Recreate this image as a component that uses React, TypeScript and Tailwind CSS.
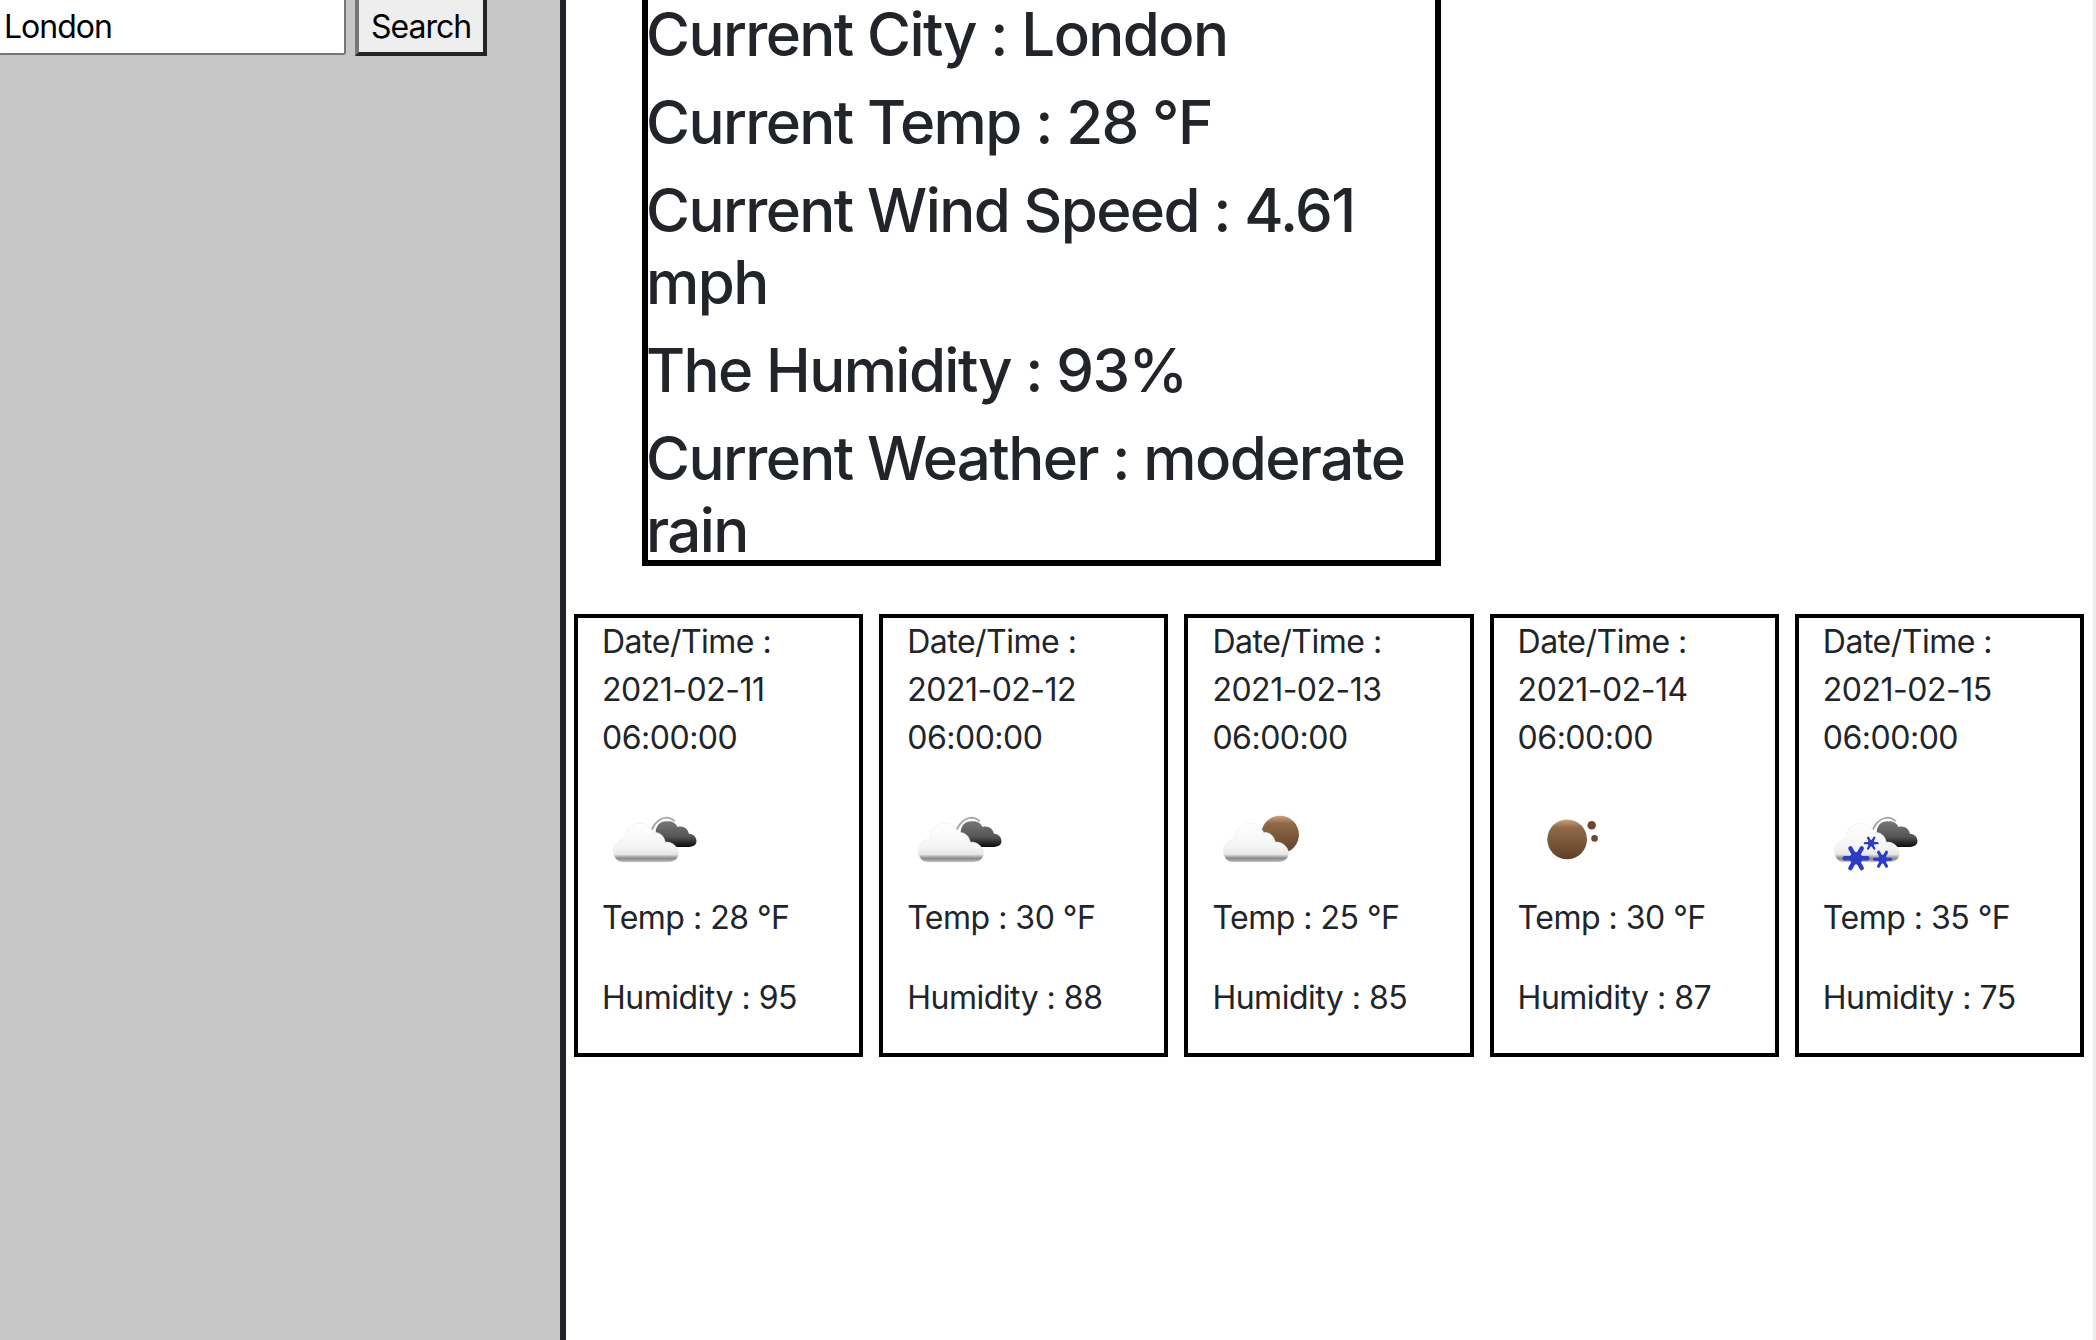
const font = "font-['Inter','Liberation_Sans',sans-serif]";

const Blur = () => (
  <filter id="soft" x="-10%" y="-10%" width="120%" height="120%">
    <feGaussianBlur stdDeviation="0.6" />
  </filter>
);

const WhiteCloud = ({ id }: { id: string }) => (
  <>
    <defs>
      <linearGradient id={id} x1="0" y1="0" x2="0" y2="1">
        <stop offset="0" stopColor="#ffffff" />
        <stop offset="0.62" stopColor="#f4f4f4" />
        <stop offset="0.8" stopColor="#e8e8e8" />
        <stop offset="0.9" stopColor="#8a8a8a" />
        <stop offset="1" stopColor="#b5b5b5" />
      </linearGradient>
    </defs>
    <path
      d="M22 72C15 72 12 66 12 60C12 53 18 48 24 48C24 38 31 31 40 31C48 31 52 36 55 41C61 40 66 45 67 51C74 50 81 56 81 63C81 69 76 72 70 72Z"
      fill={`url(#${id})`}
      stroke="#ececec"
      strokeWidth="0.6"
    />
  </>
);

const DarkCloud = ({ id }: { id: string }) => (
  <>
    <defs>
      <linearGradient id={id} x1="0" y1="0" x2="0" y2="1">
        <stop offset="0" stopColor="#777777" />
        <stop offset="0.6" stopColor="#555555" />
        <stop offset="1" stopColor="#0c0c0c" />
      </linearGradient>
    </defs>
    <path d="M51 44C52 36 58 26 68 25C72 25 75 27 77 29" fill="none" stroke="#a8a8a8" strokeWidth="2" />
    <path
      d="M68 56C61 53 57 47 57 42C56 34 62 28 69 29C74 28 78 31 80 35C86 33 91 37 92 42C97 42 100 46 100 50C100 54 96 56 92 56Z"
      fill={`url(#${id})`}
    />
  </>
);

const Flake = ({ x, y, r }: { x: number; y: number; r: number }) => (
  <g stroke="#2a3cc4" strokeWidth={r / 2.6} strokeLinecap="round">
    <line x1={x - r} y1={y} x2={x + r} y2={y} />
    <line x1={x - r * 0.5} y1={y - r * 0.87} x2={x + r * 0.5} y2={y + r * 0.87} />
    <line x1={x - r * 0.5} y1={y + r * 0.87} x2={x + r * 0.5} y2={y - r * 0.87} />
    <circle cx={x} cy={y} r={r * 0.55} fill="#2a3cc4" stroke="none" />
  </g>
);

const Icon = ({ kind, id }: { kind: string; id: string }) => (
  <svg viewBox="0 0 100 100" className="block w-[100px] h-[100px]">
    <defs>
      <Blur />
      <linearGradient id={`${id}-b`} x1="0" y1="0" x2="0" y2="1">
        <stop offset="0" stopColor="#c9a182" />
        <stop offset="0.2" stopColor="#8f6a49" />
        <stop offset="1" stopColor="#5f4026" />
      </linearGradient>
    </defs>
    <g filter="url(#soft)" transform="scale(0.945)">
      {kind === 'cloudy' && (
        <>
          <DarkCloud id={`${id}-d`} />
          <WhiteCloud id={`${id}-w`} />
        </>
      )}
      {kind === 'moon' && (
        <>
          <circle cx="72" cy="43" r="20" fill={`url(#${id}-b)`} />
          <WhiteCloud id={`${id}-w`} />
        </>
      )}
      {kind === 'clear' && (
        <>
          <circle cx="52" cy="48" r="21" fill={`url(#${id}-b)`} />
          <circle cx="78" cy="33" r="4.5" fill="#6a4a30" />
          <circle cx="81" cy="47" r="3.5" fill="#6a4a30" />
        </>
      )}
      {kind === 'snow' && (
        <>
          <DarkCloud id={`${id}-d`} />
          <WhiteCloud id={`${id}-w`} />
          <Flake x={35} y={68} r={12} />
          <Flake x={51} y={52} r={6.5} />
          <Flake x={63} y={69} r={8.5} />
        </>
      )}
    </g>
  </svg>
);

const days = [
  { date: '2021-02-11', temp: 28, humidity: 95, icon: 'cloudy' },
  { date: '2021-02-12', temp: 30, humidity: 88, icon: 'cloudy' },
  { date: '2021-02-13', temp: 25, humidity: 85, icon: 'moon' },
  { date: '2021-02-14', temp: 30, humidity: 87, icon: 'clear' },
  { date: '2021-02-15', temp: 35, humidity: 75, icon: 'snow' },
];

const stats = [
  'Current City : London',
  'Current Temp : 28 °F',
  'Current Wind Speed : 4.61 mph',
  'The Humidity : 93%',
  'Current Weather : moderate rain',
];

const App = () => (
  <div className={`flex w-[2096px] h-[1340px] overflow-hidden bg-white text-[#212529] ${font}`}>
    <aside className="w-[566px] shrink-0 bg-[#c6c6c6] border-r-[6px] border-[#212529]">
      <form className="flex items-start gap-[9px] h-[56px] -ml-0.5">
        <input
          defaultValue="London"
          className="w-[348px] h-[55px] pl-1 bg-white text-black text-[32px] tracking-[-1px] border-2 border-t-0 border-[#767676] rounded-b-[3px]"
        />
        <button
          type="button"
          className="w-[132px] h-[56px] pt-0.5 bg-[#eeeeee] text-black text-[32px] tracking-[-1px] border-4 border-t-0 border-l-[#767676] border-r-[#212529] border-b-[#212529]"
        >
          Search
        </button>
      </form>
    </aside>

    <main className="flex-1 min-w-0 border-r-[3px] border-[#ededed]">
      <section className="w-[799px] h-[568px] ml-[76px] -mt-0.5 border-[6px] border-black border-t-0">
        {stats.map((s, i) => (
          <p key={s} className={`-ml-0.5 text-[60px] leading-[72px] font-medium tracking-[-1.6px] ${i < 4 ? 'mb-4' : ''}`}>
            {s}
          </p>
        ))}
      </section>

      <div className="flex gap-4 ml-2 mr-[9px] mt-12">
        {days.map((d, i) => (
          <div key={d.date} className="flex-1 min-w-0 h-[443px] border-4 border-black pl-6 pr-6 text-[32px] leading-[48px] tracking-[-0.5px]">
            <p className="mb-8">
              Date/Time :<br />
              {d.date}
              <br />
              06:00:00
            </p>
            <Icon kind={d.icon} id={`i${i}`} />
            <p className="mb-8">Temp : {d.temp} °F</p>
            <p>Humidity : {d.humidity}</p>
          </div>
        ))}
      </div>
    </main>
  </div>
);

export default App;
